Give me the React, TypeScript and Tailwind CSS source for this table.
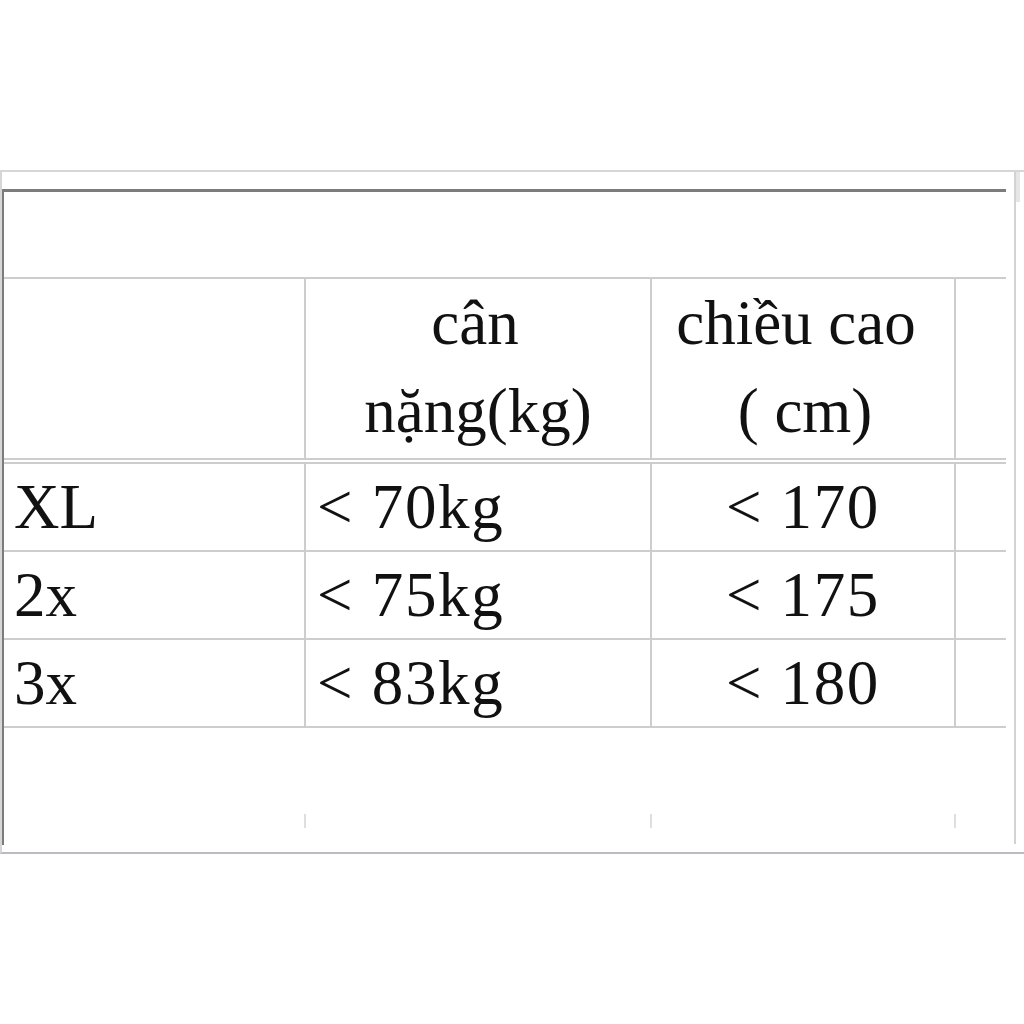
export default function App() {
  const rows = [
    { size: "XL", weight: "< 70kg", height: "< 170" },
    { size: "2x", weight: "< 75kg", height: "< 175" },
    { size: "3x", weight: "< 83kg", height: "< 180" },
  ]

  return (
    <div
      className="w-[1024px] h-[1024px] bg-white pt-[170px] text-[#111111]"
      style={{ fontFamily: '"Liberation Serif", "Times New Roman", serif' }}
    >
      {/* Sheet frame */}
      <div className="flex h-[684px] border-t-2 border-l-2 border-[#d6d6d6] border-b-2 border-b-[#b9bcc4]">
        <div className="w-[1004px] pt-[17px]">
          <div className="h-[656px] border-t-[3px] border-l-2 border-[#7c7c7c]">
            {/* empty top row */}
            <div className="h-[85px]" />

            {/* header */}
            <div className="flex border-t-2 border-b-[6px] border-double border-[#cdcdcd] text-[63px] leading-[88px]">
              <div className="w-[302px] h-[179px] border-r-2 border-[#cdcdcd]" />
              <div className="w-[346px] border-r-2 border-[#cdcdcd] text-center flex flex-col">
                <span className="pr-[6px]">cân</span>
                <span>nặng(kg)</span>
              </div>
              <div className="w-[304px] border-r-2 border-[#cdcdcd] text-center flex flex-col">
                <span className="pr-[14px]">chiều cao</span>
                <span className="pl-[4px]">( cm)</span>
              </div>
              <div className="flex-1" />
            </div>

            {/* data rows */}
            {rows.map((r) => (
              <div key={r.size} className="flex border-b-2 border-[#cdcdcd] text-[63px] leading-[86px] h-[88px]">
                <div className="w-[302px] border-r-2 border-[#cdcdcd] pl-[10px]">{r.size}</div>
                <div className="w-[346px] border-r-2 border-[#cdcdcd] pl-[11px] tracking-[1.7px]">{r.weight}</div>
                <div className="w-[304px] border-r-2 border-[#cdcdcd] text-center tracking-[1.6px]">{r.height}</div>
                <div className="flex-1" />
              </div>
            ))}

            {/* bottom empty row with tick marks */}
            <div className="flex mt-[86px] h-[14px]">
              <div className="w-[302px] border-r-2 border-[#dedede]" />
              <div className="w-[346px] border-r-2 border-[#dedede]" />
              <div className="w-[304px] border-r-2 border-[#dedede]" />
              <div className="flex-1" />
            </div>
          </div>
        </div>

        {/* scrollbar */}
        <div className="flex-1 flex justify-end pr-[4px]">
          <div className="w-[6px] h-[672px] border-l-2 border-[#d3d3d3] flex flex-col">
            <div className="h-[30px] bg-[#e6e6e6]" />
          </div>
        </div>
      </div>
    </div>
  )
}
